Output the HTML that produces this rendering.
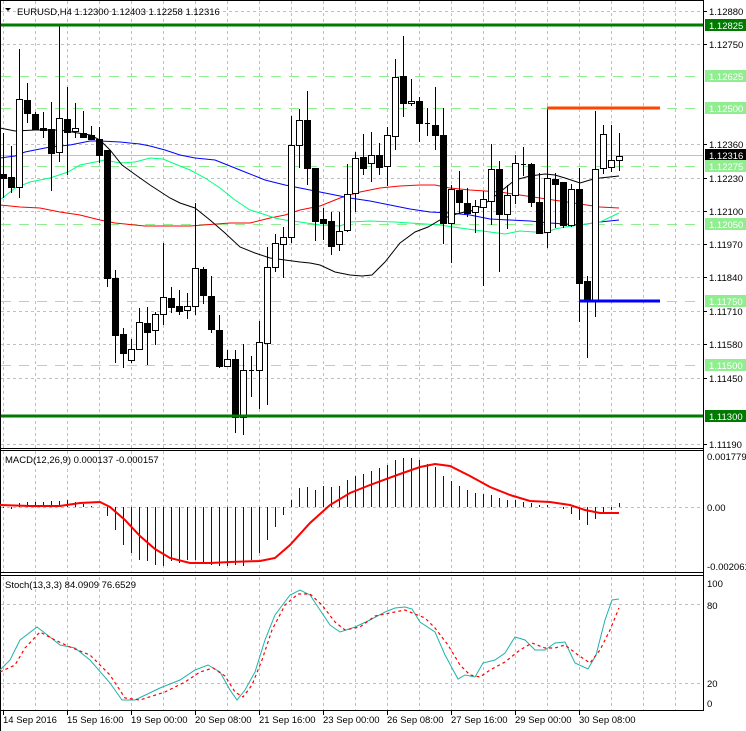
<!DOCTYPE html>
<html><head><meta charset="utf-8">
<style>
html,body{margin:0;padding:0;background:#fff;}
svg{display:block;font-family:"Liberation Sans",sans-serif;}
</style></head>
<body>
<svg id="s" width="746" height="731" xmlns="http://www.w3.org/2000/svg"></svg>
<script>
var S=document.getElementById('s'),h='';
function L(x1,y1,x2,y2,c,w,d){h+='<line x1="'+x1+'" y1="'+y1+'" x2="'+x2+'" y2="'+y2+'" stroke="'+c+'" stroke-width="'+(w||1)+'"'+(d?' stroke-dasharray="'+d+'"':'')+'/>';}
function P(pts,c,w,d){h+='<polyline fill="none" points="'+pts.map(function(p){return p.join(',')}).join(' ')+'" stroke="'+c+'" stroke-width="'+(w||1)+'"'+(d?' stroke-dasharray="'+d+'"':'')+'/>';}
function T(x,y,t,c,sz,a){h+='<text x="'+x+'" y="'+y+'" fill="'+(c||'#000')+'" font-size="'+(sz||9.5)+'"'+(a?' text-anchor="'+a+'"':'')+'>'+t+'</text>';}
function R(x,y,w,hh,f,s){h+='<rect x="'+x+'" y="'+y+'" width="'+w+'" height="'+hh+'" fill="'+f+'"'+(s?' stroke="'+s+'" stroke-width="1"':'')+'/>';}
var G='#c0c0c0',GD='3,3';
for(var k=0;k<=21;k++){var x=3.5+32*k;L(x,1,x,448,G,1,GD);L(x,451,x,572,G,1,GD);L(x,577,x,710,G,1,GD);}
[11,44,144,178,211,244,277,311,344,378,444].forEach(function(y){L(1,y+.5,703,y+.5,G,1,GD);});
[76,108,166,224,301,365].forEach(function(y){L(1,y+.5,703,y+.5,'#90ee90',1,'10,8');});
L(1,155.5,703,155.5,'#c0c0c0',1);
P([[0,205],[20,207],[40,208],[60,212],[80,215],[100,220],[115,223],[125,224],[145,226],[190,226],[230,223],[250,223],[270,218],[285,215],[300,210],[320,206],[340,198],[360,192],[380,188],[400,186],[420,185],[435,185],[450,188],[470,190],[485,191],[500,192],[520,195],[540,198],[560,201],[580,204],[600,207],[619,208]],'#ff0000');
P([[0,158],[15,156],[25,152],[50,147],[70,145],[90,141],[100,141],[120,142],[140,144],[150,146],[165,150],[180,155],[195,158],[215,160],[230,166],[245,172],[265,180],[285,185],[300,188],[320,192],[350,198],[370,201],[385,204],[410,209],[430,212],[450,213],[470,215],[490,219],[510,220],[530,221],[550,223],[580,225],[600,222],[619,220]],'#0000ff');
P([[0,200],[15,188],[30,182],[50,178],[68,172],[80,165],[95,162],[105,160],[120,163],[135,162],[150,158],[163,159],[175,164],[190,170],[205,178],[220,188],[235,200],[250,210],[260,213],[275,218],[285,220],[300,222],[320,225],[340,226],[350,222],[370,221],[395,222],[410,223],[440,225],[460,228],[475,230],[490,232],[505,234],[520,231],[535,232],[545,233],[555,229],[565,227],[580,225],[600,222],[619,213]],'#00ff7f');
P([[0,128],[15,131],[35,130],[60,130],[90,135],[100,140],[110,150],[122,165],[133,173],[150,185],[170,198],[180,203],[195,208],[210,220],[225,233],[240,247],[255,253],[270,258],[285,260],[300,262],[310,263],[320,265],[335,272],[350,275],[362,276],[372,275],[385,262],[400,243],[415,232],[428,227],[440,220],[450,216],[460,213],[475,210],[490,200],[500,192],[515,180],[530,176],[545,174],[555,175],[565,178],[580,183],[590,180],[600,178],[619,176]],'#000');
var C=[[174,178,133,198],[177,187,146,193],[187,99,49,198],[100,113,83,123],[114,129,112,129],[128,130,112,138],[129,153,102,191],[152,118,24,162],[119,132,87,175],[131,128,103,138],[133,137,111,138],[135,139,126,140],[139,155,127,163],[150,278,150,287],[278,335,270,363],[334,353,328,368],[360,349,339,363],[349,322,308,350],[323,332,307,365],[330,314,312,345],[314,297,243,325],[298,307,287,313],[306,311,290,315],[310,306,293,319],[306,268,203,315],[269,295,267,304],[296,329,276,333],[330,366,315,368],[366,359,350,367],[359,417,350,433],[417,370,344,435],[370,370,356,397],[370,342,321,409],[343,267,247,405],[267,243,234,272],[244,237,227,278],[237,145,116,243],[145,120,109,168],[120,168,91,185],[168,221,168,241],[219,223,208,240],[221,246,212,255],[244,231,212,251],[230,194,164,232],[193,158,152,212],[157,168,134,175],[163,155,132,182],[155,167,143,175],[166,135,127,186],[136,77,59,150],[76,103,36,117],[103,101,79,106],[101,123,97,142],[123,123,108,136],[125,135,87,150],[135,223,108,244],[223,189,185,263],[190,202,171,213],[203,213,188,217],[212,206,200,233],[207,199,191,286],[201,169,144,225],[169,214,161,272],[214,195,185,229],[195,163,155,204],[164,164,147,176],[164,202,163,207],[202,233,173,233],[232,178,108,248],[179,184,173,228],[182,225,182,228],[225,189,184,227],[189,283,168,322],[281,301,276,358],[301,169,111,317],[168,134,125,174],[167,160,125,172],[160,156,133,171]];
C.forEach(function(c,i){var x=3+8*i;L(x+.5,c[2],x+.5,c[3],'#000');var t=Math.min(c[0],c[1]),b=Math.max(c[0],c[1]);if(b-t<1){L(x-2,t+.5,x+3,t+.5,'#000');}else if(c[1]<c[0]){R(x-2.5,t+.5,6,b-t,'#fff','#000');}else{R(x-3,t,7,b-t+1,'#000');}});
L(1,25,703,25,'#007a00',3);L(1,416,703,416,'#007a00',3);
L(547,108,660,108,'#ff4500',3);L(579,301,660,301,'#0000ff',3);
L(0.5,0,0.5,731,'#000');L(703.5,0,703.5,711,'#000');L(0,0.5,704,0.5,'#000');
L(0,448.5,704,448.5,'#000');L(0,450.5,704,450.5,'#000');L(0,572.5,704,572.5,'#000');L(0,575.5,704,575.5,'#000');L(0,710.5,704,710.5,'#000');
h+='<polygon points="5,8 11,8 8,11" fill="#000"/>';
T(17,15,'EURUSD,H4  1.12300 1.12403 1.12258 1.12316');
var PL=[[11,'1.12880'],[44,'1.12750'],[144,'1.12360'],[178,'1.12230'],[211,'1.12100'],[244,'1.11970'],[277,'1.11840'],[311,'1.11710'],[344,'1.11580'],[378,'1.11450'],[444,'1.11190']];
PL.forEach(function(p){L(703,p[0]+.5,707,p[0]+.5,'#000');T(709,p[0]+4,p[1]);});
[[25,'1.12825','#007a00','#fff'],[76,'1.12625','#90ee90','#fff'],[108,'1.12500','#90ee90','#fff'],[155,'1.12316','#000','#fff'],[166,'1.12275','#90ee90','#fff'],[224,'1.12050','#90ee90','#fff'],[301,'1.11750','#90ee90','#fff'],[365,'1.11500','#90ee90','#fff'],[416,'1.11300','#007a00','#fff']].forEach(function(p){R(705,p[0]-6,41,12,p[2]);T(709,p[0]+4,p[1],p[3]);});
T(5,463,'MACD(12,26,9) 0.000137 -0.000157');
L(1,507.5,703,507.5,G,1,GD);
var HB=[508,509,503,502,502,502,501,501,500,502,504,506,507,516,530,545,553,560,561,565,566,561,563,560,560,564,565,566,566,565,566,560,553,540,527,515,500,488,487,490,486,487,486,480,476,474,471,468,465,460,458,458,460,464,467,476,481,486,490,493,494,495,498,500,500,502,503,505,505,507,509,514,520,525,519,513,510,503];
HB.forEach(function(v,i){var x=3.5+8*i;L(x,507,x,v,'#0000c8');});
P([[0,505],[30,506],[60,506],[80,503],[100,502],[110,507],[125,520],[140,536],[155,549],[170,558],[190,563],[210,563],[230,562],[260,561],[275,558],[290,545],[310,523],[330,505],[350,493],[370,485],[400,474],[420,467],[435,464],[450,466],[470,476],[490,487],[510,495],[530,501],[550,502],[570,505],[585,510],[600,513],[619,513]],'#ff0000',2);
T(707,460,'0.001779');T(707,511,'0.00');T(707,570,'-0.002061');
T(5,588,'Stoch(13,3,3) 84.0909 76.6529');
L(1,604.5,703,604.5,G,1,GD);L(1,683.5,703,683.5,G,1,GD);
P([[0,670],[10,660],[20,640],[37,627],[50,637],[60,645],[75,648],[90,660],[110,683],[122,700],[135,700],[160,688],[180,680],[195,670],[208,665],[220,672],[230,690],[237,700],[245,690],[255,672],[265,640],[275,615],[290,595],[300,590],[310,595],[320,610],[330,625],[340,632],[355,627],[370,620],[385,612],[395,608],[405,607],[412,609],[420,622],[435,632],[445,655],[458,679],[465,675],[475,677],[483,663],[495,660],[505,653],[515,637],[525,640],[535,650],[545,650],[555,643],[565,642],[575,663],[588,669],[596,655],[605,620],[612,600],[619,599]],'#20b2aa');
P([[0,672],[15,665],[25,648],[40,632],[55,640],[70,647],[90,655],[110,675],[125,698],[140,700],[165,692],[185,682],[200,672],[213,668],[225,676],[235,692],[243,697],[252,685],[262,660],[272,630],[285,605],[298,594],[310,594],[322,605],[335,622],[345,630],[360,627],[375,616],[390,613],[405,610],[415,614],[425,618],[435,628],[448,645],[460,665],[470,675],[480,677],[490,670],[505,662],[520,650],[532,643],[545,648],[555,648],[565,645],[578,655],[590,663],[600,650],[610,630],[619,608]],'#ff0000',1.2,'3,3');
T(707,587,'100');T(707,609,'80');T(707,687,'20');T(707,707,'0');
[[3,'14 Sep 2016'],[67,'15 Sep 16:00'],[131,'19 Sep 00:00'],[195,'20 Sep 08:00'],[259,'21 Sep 16:00'],[323,'23 Sep 00:00'],[387,'26 Sep 08:00'],[451,'27 Sep 16:00'],[515,'29 Sep 00:00'],[579,'30 Sep 08:00']].forEach(function(d){L(d[0]+.5,711,d[0]+.5,715,'#000');T(d[0],723,d[1]);});
S.innerHTML=h;
</script>
</body></html>
